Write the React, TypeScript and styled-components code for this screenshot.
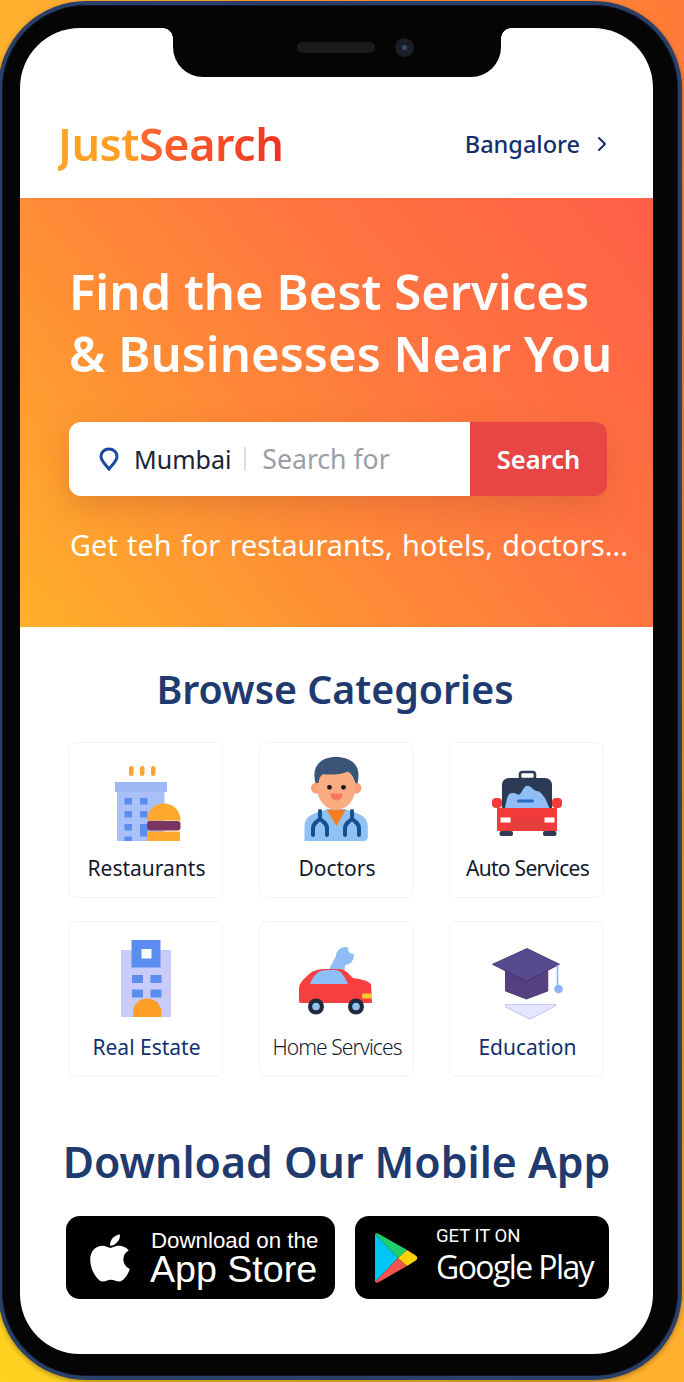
import React from "react";
import styled, { createGlobalStyle } from "styled-components";
import { ChevronRight } from "lucide-react";
import { FaApple } from "react-icons/fa";

const GlobalStyle = createGlobalStyle`
  html, body {
    margin: 0;
    padding: 0;
  }
  body {
    font-family: "Noto Sans", "Open Sans", Arial, sans-serif;
  }
`;

const Page = styled.div`
  width: 684px;
  height: 1382px;
  overflow: hidden;
  padding-top: 1px;
  box-sizing: border-box;
  background: linear-gradient(to bottom left, #ff7a38 0%, #ffb02e 50%, #ffd21f 100%);
`;

const Phone = styled.div`
  width: 684px;
  height: 1379px;
  margin-left: -2px;
  box-sizing: border-box;
  padding: 23px 25px 22px 18px;
  border: 4px solid #2b4068;
  border-radius: 88px;
  background: #050505;
  box-shadow: inset 0 0 0 1px #0e1626, 0 2px 5px rgba(0, 0, 0, 0.3);
`;

const Screen = styled.div`
  position: relative;
  height: 100%;
  overflow: hidden;
  display: flex;
  flex-direction: column;
  background: #fff;
  border-radius: 60px;
`;

const Notch = styled.div`
  position: absolute;
  top: 0;
  left: 153px;
  width: 328px;
  height: 49px;
  display: flex;
  align-items: center;
  justify-content: center;
  gap: 20px;
  padding: 0 0 10px 36px;
  box-sizing: border-box;
  background: #050505;
  border-radius: 0 0 30px 30px;

  &::before,
  &::after {
    content: "";
    position: absolute;
    top: 0;
    width: 10px;
    height: 10px;
  }
  &::before {
    left: -10px;
    background: radial-gradient(circle at 0 100%, transparent 9.5px, #050505 10px);
  }
  &::after {
    right: -10px;
    background: radial-gradient(circle at 100% 100%, transparent 9.5px, #050505 10px);
  }
`;

const Speaker = styled.div`
  width: 78px;
  height: 11px;
  border-radius: 5px;
  background: #1a1a1d;
`;

const Camera = styled.div`
  width: 19px;
  height: 19px;
  border-radius: 50%;
  display: flex;
  align-items: center;
  justify-content: center;
  background: #1b1e26;

  &::after {
    content: "";
    width: 5px;
    height: 5px;
    border-radius: 50%;
    background: #31506e;
  }
`;

const Header = styled.header`
  height: 170px;
  flex: none;
  box-sizing: border-box;
  padding: 60px 39px 0 38px;
  display: flex;
  align-items: center;
  justify-content: space-between;
`;

const Logo = styled.div`
  font-size: 45px;
  font-weight: 600;
  letter-spacing: -0.5px;
`;

const LogoPart = styled.span<{ $from: string; $to: string }>`
  background: linear-gradient(90deg, ${(p) => p.$from}, ${(p) => p.$to});
  -webkit-background-clip: text;
  background-clip: text;
  color: transparent;
`;

const City = styled.div`
  display: flex;
  align-items: center;
  gap: 10px;
  margin-top: 2px;
  font-size: 23.5px;
  font-weight: 500;
  color: #12306e;
`;

const Hero = styled.section`
  height: 429px;
  flex: none;
  box-sizing: border-box;
  padding: 62px 0 0 49px;
  background: linear-gradient(50deg, #ffb02a 0%, #ff8c36 36%, #ff7440 64%, #ff5f48 100%);
  color: #fff;
`;

const HeroTitle = styled.h1`
  margin: 0 0 38px 0;
  font-size: 49px;
  line-height: 62px;
  font-weight: 600;
  white-space: nowrap;
`;

const SearchBar = styled.div`
  width: 538px;
  height: 74px;
  display: flex;
  border-radius: 12px;
  box-shadow: 0 10px 30px rgba(170, 80, 40, 0.3);
`;

const Field = styled.div`
  flex: 1;
  display: flex;
  align-items: center;
  box-sizing: border-box;
  padding-left: 30px;
  background: #fff;
  border-radius: 12px 0 0 12px;
`;

const CityName = styled.span`
  margin-left: 15px;
  font-size: 25px;
  color: #1a2233;
`;

const Divider = styled.span`
  width: 2px;
  height: 24px;
  margin: 0 16px 0 13px;
  background: #dcdee2;
`;

const Placeholder = styled.span`
  font-size: 26.6px;
  color: #9a9ea6;
`;

const SearchButton = styled.button`
  width: 137px;
  border: 0;
  padding: 0;
  border-radius: 0 12px 12px 0;
  background: #e84545;
  color: #fff;
  font-family: inherit;
  font-size: 25.5px;
  font-weight: 600;
`;

const HeroNote = styled.p`
  margin: 28px 0 0 1px;
  font-size: 28.8px;
  line-height: 42px;
  word-spacing: 2px;
  white-space: nowrap;
`;

const SectionTitle = styled.h2<{ $size: number; $nudge?: number }>`
  margin: 0;
  padding-right: ${(p) => p.$nudge ?? 0}px;
  text-align: center;
  font-size: ${(p) => p.$size}px;
  font-weight: 600;
  color: #1f3a6e;
  white-space: nowrap;
`;

const Categories = styled.section`
  padding: 35px 0 0;
`;

const Grid = styled.div`
  display: grid;
  grid-template-columns: repeat(3, 155px);
  grid-auto-rows: 156px;
  column-gap: 35.5px;
  row-gap: 23px;
  margin: 26px 0 0 48px;
`;

const Card = styled.div`
  display: flex;
  flex-direction: column;
  align-items: center;
  box-sizing: border-box;
  padding-top: 7px;
  border: 1px solid #f3f3f6;
  border-radius: 8px;
  background: #fff;
`;

const CardIcon = styled.svg`
  width: 90px;
  height: 96px;
  flex: none;
`;

const CardLabel = styled.span<{ $navy?: boolean; $tracking?: number; $light?: boolean }>`
  margin: 7px 0 0 2px;
  font-size: 21px;
  line-height: 30px;
  font-weight: ${(p) => (p.$light ? 300 : 400)};
  letter-spacing: ${(p) => p.$tracking ?? 0}px;
  color: ${(p) => (p.$navy ? "#12306e" : "#111a2e")};
  white-space: nowrap;
`;

const AppSection = styled.section`
  padding-top: 55px;
`;

const Stores = styled.div`
  display: flex;
  gap: 20px;
  margin: 25px 0 0 46px;
`;

const StoreButton = styled.div<{ $width: number; $pad: number }>`
  width: ${(p) => p.$width}px;
  height: 83px;
  flex: none;
  display: flex;
  align-items: center;
  box-sizing: border-box;
  padding-left: ${(p) => p.$pad}px;
  border-radius: 14px;
  background: #000;
  color: #fff;
`;

const StoreText = styled.div`
  display: flex;
  flex-direction: column;
  padding-bottom: 4px;
`;

const AppleSmall = styled.span`
  margin-left: 1px;
  font-family: "Liberation Sans", Arial, sans-serif;
  font-size: 22.3px;
  line-height: 26px;
  white-space: nowrap;
`;

const AppleBig = styled.span`
  font-family: "Liberation Sans", Arial, sans-serif;
  font-size: 37.6px;
  line-height: 30px;
  white-space: nowrap;
`;

const PlaySmall = styled.span`
  font-family: "Roboto", Arial, sans-serif;
  font-size: 18.5px;
  line-height: 22px;
  white-space: nowrap;
`;

const PlayBig = styled.span`
  font-family: "Open Sans", Arial, sans-serif;
  font-size: 32px;
  line-height: 40px;
  letter-spacing: -1.6px;
  white-space: nowrap;
`;

const RestaurantIcon = () => (
  <CardIcon viewBox="0 0 90 96">
    <rect x="28" y="16" width="4.5" height="10" rx="2.2" fill="#ffa32a" />
    <rect x="39" y="16" width="4.5" height="10" rx="2.2" fill="#ffa32a" />
    <rect x="50" y="16" width="4.5" height="10" rx="2.2" fill="#ffa32a" />
    <rect x="14" y="32" width="52" height="10" fill="#9db8f5" />
    <rect x="16" y="42" width="47.5" height="49" fill="#a9c0f8" />
    {[48, 61, 74].map((y) => (
      <rect key={y} x="23.5" y={y} width="7.5" height="6.5" fill="#5b8def" />
    ))}
    <rect x="23.5" y="86.5" width="7.5" height="4.5" fill="#5b8def" />
    <rect x="39" y="48" width="7.5" height="6.5" fill="#5b8def" />
    <rect x="39" y="61" width="7.5" height="6.5" fill="#5b8def" />
    <rect x="39" y="74" width="7.5" height="12.5" fill="#5b8def" />
    <path d="M46 70.5 C46 60 54 53.5 63 53.5 C72 53.5 79.5 60 79.5 70.5 Z" fill="#ffa82e" />
    <rect x="46" y="71" width="33.5" height="9.5" rx="3" fill="#7a3560" />
    <path d="M46 81.5 H79 V91 H46 Z" fill="#ffa82e" />
  </CardIcon>
);

const DoctorIcon = () => (
  <CardIcon viewBox="0 0 90 96">
    <path d="M13.5 91 V76 C13.5 68 20 64 28 62 L37 59 H54 L62 62 C70 64 76.8 68 76.8 76 V87 C76.8 89.5 75 91 73 91 Z" fill="#8fc1f5" />
    <path d="M36 60 H54.5 L45.5 76 Z" fill="#f97b1d" />
    <circle cx="25.5" cy="38" r="5.5" fill="#f9a27a" />
    <circle cx="65" cy="38" r="5.5" fill="#f9a27a" />
    <ellipse cx="45.2" cy="38" rx="19" ry="22" fill="#f9ab82" />
    <path d="M24.5 33 C20 17 29 7 45 7 C60 7 71 15 66.5 33 C65.5 34 64 33 63.5 31 C62 26 60 24 57 21.5 C49 25 37 25 32 24 C29 26 28 29 27.5 33 Z" fill="#3a5478" />
    <circle cx="38.5" cy="37.3" r="2.4" fill="#1a1a1a" />
    <circle cx="52.5" cy="37.3" r="2.4" fill="#1a1a1a" />
    <path d="M39.5 43.5 H51.5 C51.5 48 48.5 50.5 45.5 50.5 C42.5 50.5 39.5 48 39.5 43.5 Z" fill="#f4785e" />
    <path d="M29 61 V68 C29 71 22 72 22 78 V85 M29 68 C29 71 36 72 36 78 V85" fill="none" stroke="#17508f" strokeWidth="4" strokeLinecap="round" />
    <path d="M61 61 V68 C61 71 54 72 54 78 V85 M61 68 C61 71 68 72 68 78 V85" fill="none" stroke="#17508f" strokeWidth="4" strokeLinecap="round" />
  </CardIcon>
);

const AutoIcon = () => (
  <CardIcon viewBox="0 0 90 96">
    <rect x="38" y="22" width="15" height="7" rx="2.5" fill="none" stroke="#2d3a55" strokeWidth="2.6" />
    <path d="M20 62 V35 C20 31 23 28 27 28 H63 C67 28 70 31 70 35 V62 Z" fill="#2d3a55" />
    <path d="M23 58 C25 50 25 42 31 43 C35 43 36 46 38 44 C41 41 42 34 47 36 C51 38 53 42 56 41 C60 43 61 46 63 48 C65 52 66 55 67.5 58 Z" fill="#8fbdf5" />
    <rect x="35" y="49.5" width="17" height="3" rx="1.5" fill="#2a6bc0" />
    <rect x="10" y="48" width="10" height="10" rx="4" fill="#f53a3a" />
    <rect x="70" y="48" width="10" height="10" rx="4" fill="#f53a3a" />
    <path d="M15 58 H75 V81 H15 Z" fill="#f53a3a" />
    <path d="M25 68 H65 V81 H25 Z" fill="#e83d3d" />
    <rect x="18.5" y="67.5" width="10" height="5" fill="#fff" />
    <rect x="62.5" y="67.5" width="10" height="5" fill="#fff" />
    <rect x="17.5" y="81" width="13.5" height="5" rx="2" fill="#2d3a55" />
    <rect x="61" y="81" width="13.5" height="5" rx="2" fill="#2d3a55" />
  </CardIcon>
);

const EstateIcon = () => (
  <CardIcon viewBox="0 0 90 96">
    <rect x="20" y="21" width="50" height="67" fill="#c9ccf8" />
    <rect x="30.5" y="11" width="29" height="27.5" fill="#5b8def" />
    <rect x="40.5" y="20" width="10" height="9.5" fill="#fff" />
    <rect x="31" y="46" width="11" height="8" fill="#5b8def" />
    <rect x="49.5" y="46" width="11" height="8" fill="#5b8def" />
    <rect x="31" y="60.5" width="11" height="8" fill="#5b8def" />
    <rect x="49.5" y="60.5" width="11" height="8" fill="#5b8def" />
    <path d="M32 88 V84 C32 75 38 69.5 46 69.5 C54 69.5 60.5 75 60.5 84 V88 Z" fill="#ff9f2a" />
  </CardIcon>
);

const HomeIcon = () => (
  <CardIcon viewBox="0 0 90 96">
    <circle cx="54" cy="27" r="9" fill="#8fbdf5" />
    <circle cx="62" cy="20" r="5" fill="#fff" />
    <path d="M46 25 L55 30 L53 44 L36 44 Z" fill="#8fbdf5" />
    <path d="M8 72 V60 C8 54 13 50 16 47 C21 42 26 40 34 40 H48 C54 40 58 45 62 49 C68 50 76 51 80 55 L81 74 H12 C9 74 8 74 8 72 Z" fill="#f83f3f" />
    <path d="M19 55 C22 47 27 41 36 41 H45 C50 41 55 50 57 55 Z" fill="#8fbdf5" />
    <rect x="71" y="64.5" width="10" height="5" rx="1.5" fill="#f9c92c" />
    <circle cx="25" cy="77.5" r="8" fill="#202a3c" />
    <circle cx="25" cy="77.5" r="3.8" fill="#8fc1f5" />
    <circle cx="65" cy="77.5" r="8" fill="#202a3c" />
    <circle cx="65" cy="77.5" r="3.8" fill="#8fc1f5" />
  </CardIcon>
);

const EducationIcon = () => (
  <CardIcon viewBox="0 0 90 96">
    <path d="M23.5 42 V62 L44.5 70 L65.8 62 V42 Z" fill="#56407f" stroke="#3d2c6a" strokeWidth="0.8" />
    <path d="M45 19.5 L77.5 35.3 L44.5 52.5 L10.5 35.3 Z" fill="#574a8f" stroke="#3d2c6a" strokeWidth="0.8" />
    <path d="M75.5 36 V56" stroke="#8fb2f5" strokeWidth="1.6" />
    <circle cx="76.5" cy="60" r="4.3" fill="#8fb2f5" />
    <path d="M23.5 75.5 H73.5 V77 L48 90 L24 78 Z" fill="#e6e5ff" stroke="#c5ccfb" strokeWidth="1.2" />
  </CardIcon>
);

const categories = [
  { label: "Restaurants", icon: <RestaurantIcon /> },
  { label: "Doctors", icon: <DoctorIcon /> },
  { label: "Auto Services", icon: <AutoIcon />, tracking: -0.7 },
  { label: "Real Estate", icon: <EstateIcon />, navy: true },
  { label: "Home Services", icon: <HomeIcon />, tracking: -0.9, light: true },
  { label: "Education", icon: <EducationIcon />, navy: true },
];

const App: React.FC = () => (
  <Page>
    <GlobalStyle />
    <Phone>
      <Screen>
        <Notch>
          <Speaker />
          <Camera />
        </Notch>
        <Header>
          <Logo>
            <LogoPart $from="#ffa422" $to="#ff9a22">Just</LogoPart>
            <LogoPart $from="#ff6a30" $to="#ee3320">Search</LogoPart>
          </Logo>
          <City>
            Bangalore
            <ChevronRight size={24} strokeWidth={2} />
          </City>
        </Header>
        <Hero>
          <HeroTitle>
            Find the Best Services
            <br />& Businesses Near You
          </HeroTitle>
          <SearchBar>
            <Field>
              <svg width="20" height="24" viewBox="0 0 20 24">
                <path
                  d="M10 22 C7 18 2 14 2 9.5 C2 5 5.5 2 10 2 C14.5 2 18 5 18 9.5 C18 14 13 18 10 22 Z"
                  fill="none"
                  stroke="#1a4aa0"
                  strokeWidth="3"
                />
              </svg>
              <CityName>Mumbai</CityName>
              <Divider />
              <Placeholder>Search for</Placeholder>
            </Field>
            <SearchButton>Search</SearchButton>
          </SearchBar>
          <HeroNote>Get teh for restaurants, hotels, doctors...</HeroNote>
        </Hero>
        <Categories>
          <SectionTitle $size={39.3} $nudge={3}>Browse Categories</SectionTitle>
          <Grid>
            {categories.map((c) => (
              <Card key={c.label}>
                {c.icon}
                <CardLabel $navy={c.navy} $tracking={c.tracking} $light={c.light}>
                  {c.label}
                </CardLabel>
              </Card>
            ))}
          </Grid>
        </Categories>
        <AppSection>
          <SectionTitle $size={42.8}>Download Our Mobile App</SectionTitle>
          <Stores>
            <StoreButton $width={269} $pad={17}>
              <FaApple size={54} style={{ marginRight: 13, flex: "none" }} />
              <StoreText>
                <AppleSmall>Download on the</AppleSmall>
                <AppleBig>App Store</AppleBig>
              </StoreText>
            </StoreButton>
            <StoreButton $width={254} $pad={19}>
              <svg width="44" height="52" viewBox="0 0 44 52" style={{ marginRight: 18, flex: "none" }}>
                <path d="M1 2 L24 26 L1 50 Z" fill="#00c6f5" />
                <path d="M1 2 C2 1 3 1 5 2 L33 18 L24 26 Z" fill="#1fcf6b" />
                <path d="M1 50 C2 51 3 51 5 50 L33 34 L24 26 Z" fill="#f2534f" />
                <path d="M33 18 L41 23 C44 25 44 27 41 29 L33 34 L24 26 Z" fill="#fdd109" />
              </svg>
              <StoreText>
                <PlaySmall>GET IT ON</PlaySmall>
                <PlayBig>Google Play</PlayBig>
              </StoreText>
            </StoreButton>
          </Stores>
        </AppSection>
      </Screen>
    </Phone>
  </Page>
);

export default App;
